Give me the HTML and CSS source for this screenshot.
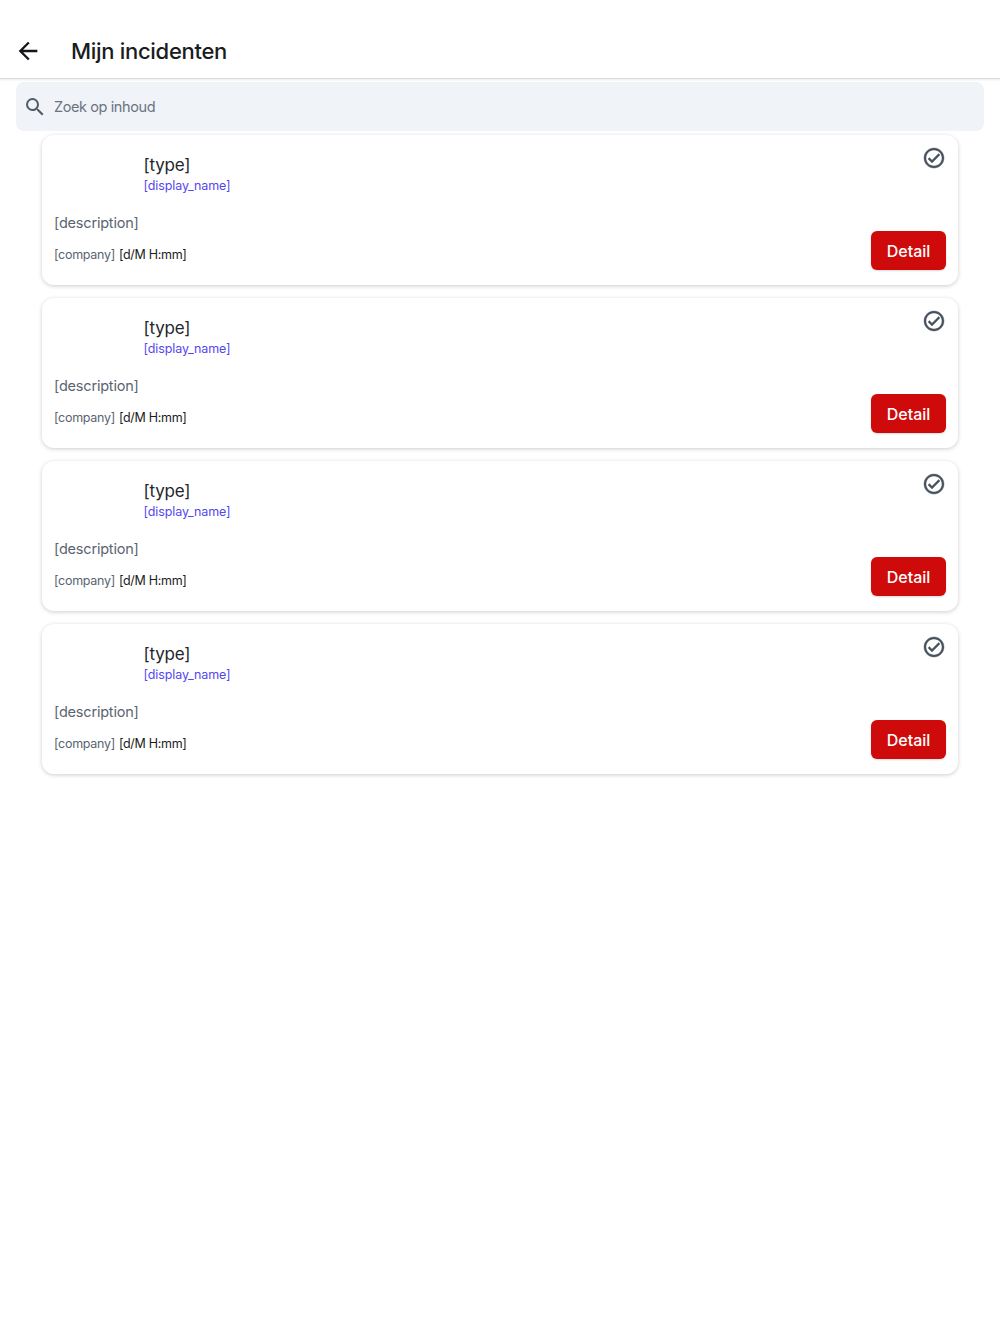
FILE: index.html
```html
<!DOCTYPE html>
<html lang="nl">
<head>
<meta charset="utf-8">
<title>Mijn incidenten</title>
<link rel="stylesheet" href="styles.css">
</head>
<body>
<header class="topbar">
  <svg class="back" viewBox="0 0 24 24" width="28" height="28"><path d="M20 11H7.83l5.59-5.59L12 4l-8 8 8 8 1.41-1.41L7.83 13H20v-2z"/></svg>
  <h1 class="title">Mijn incidenten</h1>
</header>
<div class="search">
  <svg class="search-icon" viewBox="0 0 24 24" width="24" height="24"><path d="M15.5 14h-.79l-.28-.27A6.47 6.47 0 0 0 16 9.5 6.5 6.5 0 1 0 9.5 16c1.61 0 3.09-.59 4.23-1.57l.27.28v.79l5 4.99L20.49 19l-4.99-5zm-6 0C7.01 14 5 11.99 5 9.5S7.01 5 9.5 5 14 7.01 14 9.5 11.99 14 9.5 14z"/></svg>
  <span class="placeholder">Zoek op inhoud</span>
</div>
<main class="list">
  <article class="card">
    <svg class="check" viewBox="0 0 24 24" width="24" height="24"><path d="M12 2C6.48 2 2 6.48 2 12s4.48 10 10 10 10-4.48 10-10S17.52 2 12 2zm0 18c-4.41 0-8-3.59-8-8s3.59-8 8-8 8 3.59 8 8-3.59 8-8 8zm4.59-12.42L10 14.17l-2.59-2.58L6 13l4 4 8-8-1.41-1.42z"/></svg>
    <div class="heading"><div class="type">[type]</div><div class="name">[display_name]</div></div>
    <div class="desc">[description]</div>
    <div class="foot"><div class="meta"><span class="company">[company]</span><span class="date">[d/M H:mm]</span></div><button class="detail">Detail</button></div>
  </article>
  <article class="card">
    <svg class="check" viewBox="0 0 24 24" width="24" height="24"><path d="M12 2C6.48 2 2 6.48 2 12s4.48 10 10 10 10-4.48 10-10S17.52 2 12 2zm0 18c-4.41 0-8-3.59-8-8s3.59-8 8-8 8 3.59 8 8-3.59 8-8 8zm4.59-12.42L10 14.17l-2.59-2.58L6 13l4 4 8-8-1.41-1.42z"/></svg>
    <div class="heading"><div class="type">[type]</div><div class="name">[display_name]</div></div>
    <div class="desc">[description]</div>
    <div class="foot"><div class="meta"><span class="company">[company]</span><span class="date">[d/M H:mm]</span></div><button class="detail">Detail</button></div>
  </article>
  <article class="card">
    <svg class="check" viewBox="0 0 24 24" width="24" height="24"><path d="M12 2C6.48 2 2 6.48 2 12s4.48 10 10 10 10-4.48 10-10S17.52 2 12 2zm0 18c-4.41 0-8-3.59-8-8s3.59-8 8-8 8 3.59 8 8-3.59 8-8 8zm4.59-12.42L10 14.17l-2.59-2.58L6 13l4 4 8-8-1.41-1.42z"/></svg>
    <div class="heading"><div class="type">[type]</div><div class="name">[display_name]</div></div>
    <div class="desc">[description]</div>
    <div class="foot"><div class="meta"><span class="company">[company]</span><span class="date">[d/M H:mm]</span></div><button class="detail">Detail</button></div>
  </article>
  <article class="card">
    <svg class="check" viewBox="0 0 24 24" width="24" height="24"><path d="M12 2C6.48 2 2 6.48 2 12s4.48 10 10 10 10-4.48 10-10S17.52 2 12 2zm0 18c-4.41 0-8-3.59-8-8s3.59-8 8-8 8 3.59 8 8-3.59 8-8 8zm4.59-12.42L10 14.17l-2.59-2.58L6 13l4 4 8-8-1.41-1.42z"/></svg>
    <div class="heading"><div class="type">[type]</div><div class="name">[display_name]</div></div>
    <div class="desc">[description]</div>
    <div class="foot"><div class="meta"><span class="company">[company]</span><span class="date">[d/M H:mm]</span></div><button class="detail">Detail</button></div>
  </article>
</main>
</body>
</html>
```
FILE: styles.css
```css
* { box-sizing: border-box; }
html, body { margin: 0; padding: 0; background: #fff; }
body { font-family: Inter, "Noto Sans", sans-serif; color: #1a1c20; min-height: 1334px; }
.topbar {
  height: 79px;
  display: flex;
  align-items: flex-end;
  padding: 0 0 13px 14px;
  border-bottom: 1px solid #dcdcdc;
  box-shadow: 0 1px 2px rgba(0,0,0,.08);
}
.back { width: 28px; height: 28px; fill: #14161a; }
.title { margin: 0 0 0 29px; font-size: 22px; line-height: 28px; font-weight: 500; letter-spacing: -0.3px; }
.search {
  margin: 3px 16px 4px;
  height: 49px;
  background: #f0f3f8;
  border-radius: 8px;
  display: flex;
  align-items: center;
  padding-left: 7px;
  gap: 7px;
}
.search-icon { fill: #4f5b66; }
.placeholder { font-size: 14.5px; color: #6a7480; letter-spacing: -0.4px; }
.list { padding: 0 42px; display: flex; flex-direction: column; gap: 13px; }
.card {
  position: relative;
  height: 150px;
  background: #fff;
  border-radius: 12px;
  box-shadow: 0 1px 4px rgba(0,0,0,.2);
  padding: 19px 12px 0;
}
.check { position: absolute; top: 11px; right: 12px; fill: #46525e; stroke: #46525e; stroke-width: .4px; }
.heading { padding-left: 89.5px; }
.type { font-size: 17px; line-height: 22px; color: #23262b; letter-spacing: -0.2px; }
.name { font-size: 12.5px; line-height: 18px; margin-top: 1px; color: #5547f0; letter-spacing: -0.1px; }
.desc { font-size: 14.5px; line-height: 20px; margin-top: 18px; color: #5a6470; letter-spacing: -0.2px; }
.foot { position: absolute; left: 12px; right: 12px; bottom: 15px; display: flex; justify-content: space-between; align-items: flex-end; }
.meta { font-size: 12.5px; line-height: 18px; display: flex; gap: 4px; margin-bottom: 6px; letter-spacing: -0.3px; }
.company { color: #5a6470; }
.date { color: #1a1c20; }
.detail {
  width: 75px;
  height: 39px;
  border: 0;
  padding: 0;
  border-radius: 6px;
  background: #cf0a0a;
  color: #fff;
  font: 500 16px Inter, sans-serif;
  box-shadow: 0 1px 2px rgba(0,0,0,.15);
}
```
